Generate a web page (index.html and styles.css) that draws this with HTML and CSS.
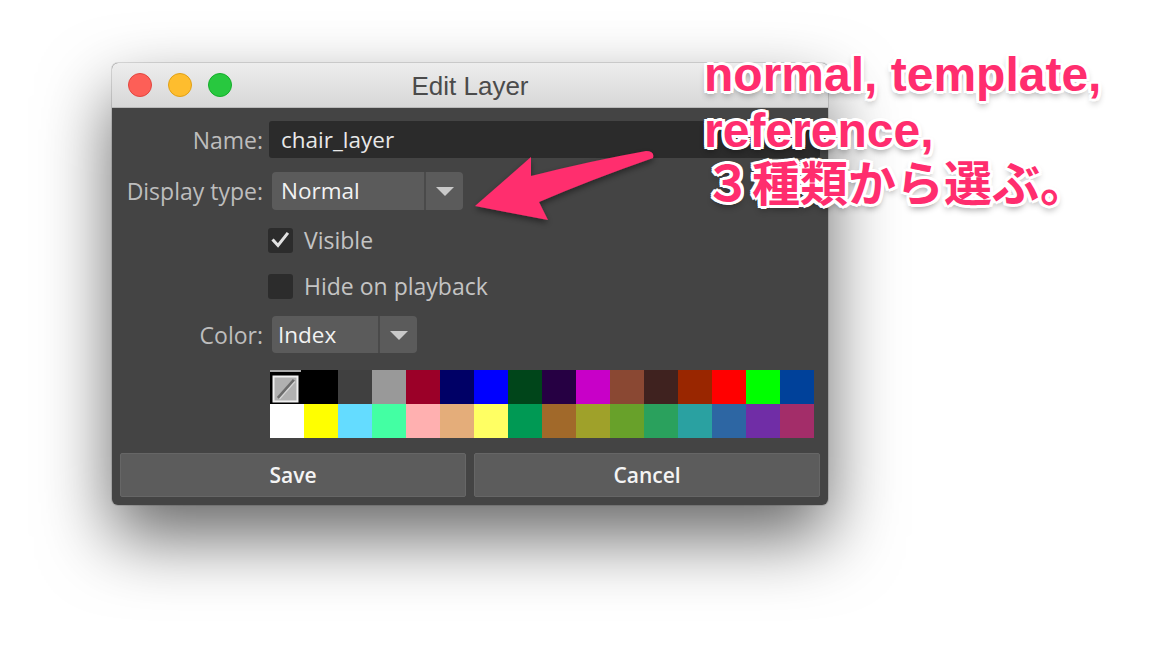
FILE: index.html
```html
<!DOCTYPE html>
<html lang="ja">
<head>
<meta charset="utf-8">
<title>Edit Layer</title>
<link rel="stylesheet" href="styles.css">
</head>
<body>
<div class="stage">
  <div class="window">
    <div class="titlebar">
      <div class="lights">
        <span class="light red"></span>
        <span class="light yellow"></span>
        <span class="light green"></span>
      </div>
      <div class="title">Edit Layer</div>
      <div class="spacer"></div>
    </div>
    <div class="content">
      <div class="row row-name">
        <span class="lbl">Name:</span>
        <div class="field">chair_layer</div>
      </div>
      <div class="row row-display">
        <span class="lbl">Display type:</span>
        <div class="combo combo-display">
          <span class="combo-text">Normal</span>
          <span class="combo-btn"><svg width="18" height="9" viewBox="0 0 18 9"><path d="M0 0 H18 L9 9 Z" fill="#c9c9c9"/></svg></span>
        </div>
      </div>
      <div class="row row-visible">
        <span class="lbl"></span>
        <div class="checkrow">
          <span class="check"><svg width="25" height="25" viewBox="0 0 25 25"><path d="M5.5 12.5 L10 17.5 L19 6" fill="none" stroke="#e2e2e2" stroke-width="3" stroke-linecap="square"/></svg></span>
          <span class="check-label">Visible</span>
        </div>
      </div>
      <div class="row row-hide">
        <span class="lbl"></span>
        <div class="checkrow">
          <span class="check"></span>
          <span class="check-label">Hide on playback</span>
        </div>
      </div>
      <div class="row row-color">
        <span class="lbl">Color:</span>
        <div class="combo combo-color">
          <span class="combo-text">Index</span>
          <span class="combo-btn"><svg width="18" height="9" viewBox="0 0 18 9"><path d="M0 0 H18 L9 9 Z" fill="#c9c9c9"/></svg></span>
        </div>
      </div>
      <div class="row row-palette">
        <span class="lbl"></span>
        <div class="palette">
          <span class="sw sw-none"><svg width="34" height="34" viewBox="0 0 34 34"><rect x="0" y="0" width="31" height="2" fill="#a9a9a9"/><rect x="3.5" y="6.5" width="24" height="25" fill="#b1b1b1" stroke="#f0f0f0" stroke-width="2"/><path d="M8 28 L24 10" stroke="#6c6c6c" stroke-width="3"/><path d="M9.5 29 L25 11.5" stroke="#d6d6d6" stroke-width="1.2"/></svg></span>
          <span class="sw" style="background:#000000"></span>
          <span class="sw" style="background:#404040"></span>
          <span class="sw" style="background:#999999"></span>
          <span class="sw" style="background:#9b0028"></span>
          <span class="sw" style="background:#000066"></span>
          <span class="sw" style="background:#0000ff"></span>
          <span class="sw" style="background:#00451a"></span>
          <span class="sw" style="background:#260043"></span>
          <span class="sw" style="background:#c800c8"></span>
          <span class="sw" style="background:#8a4833"></span>
          <span class="sw" style="background:#3f221f"></span>
          <span class="sw" style="background:#992600"></span>
          <span class="sw" style="background:#ff0000"></span>
          <span class="sw" style="background:#00ff00"></span>
          <span class="sw" style="background:#00419a"></span>
          <span class="sw" style="background:#ffffff"></span>
          <span class="sw" style="background:#ffff00"></span>
          <span class="sw" style="background:#64dcff"></span>
          <span class="sw" style="background:#43ffa3"></span>
          <span class="sw" style="background:#ffb0b0"></span>
          <span class="sw" style="background:#e4ad7a"></span>
          <span class="sw" style="background:#ffff63"></span>
          <span class="sw" style="background:#009954"></span>
          <span class="sw" style="background:#a1692a"></span>
          <span class="sw" style="background:#9fa12a"></span>
          <span class="sw" style="background:#68a12a"></span>
          <span class="sw" style="background:#2aa15d"></span>
          <span class="sw" style="background:#2aa1a1"></span>
          <span class="sw" style="background:#2d66a3"></span>
          <span class="sw" style="background:#702da6"></span>
          <span class="sw" style="background:#a32d69"></span>
        </div>
      </div>
      <div class="buttons">
        <button class="btn">Save</button>
        <button class="btn">Cancel</button>
      </div>
    </div>
  </div>
</div>

<svg class="arrow" width="1164" height="666" viewBox="0 0 1164 666">
  <defs>
    <filter id="sh" x="-20%" y="-20%" width="140%" height="160%">
      <feDropShadow dx="0" dy="3" stdDeviation="3" flood-color="#000" flood-opacity="0.45"/>
    </filter>
  </defs>
  <path d="M475 206 L531 157 L531 176 Q590 161 646 151 Q655 151 653 158 Q590 180 539 202 L548 220 Z" fill="#ff2d6e" filter="url(#sh)"/>
</svg>

<div class="note">
  <span class="note-line">normal, template,</span>
  <span class="note-line">reference,</span>
  <span class="note-line note-jp">３種類から選ぶ。</span>
</div>
</body>
</html>
```

FILE: styles.css
```css
* { box-sizing: border-box; }

html, body {
  margin: 0;
  padding: 0;
  background: #ffffff;
}

body {
  width: 1164px;
  height: 666px;
  overflow: hidden;
  position: relative;
  font-family: "Open Sans", "Noto Sans", sans-serif;
}

.stage {
  padding: 63px 0 0 112px;
}

.window {
  width: 716px;
  height: 442px;
  border-radius: 6px;
  background: #444444;
  box-shadow: 0 32px 70px rgba(0, 0, 0, 0.6), 0 0 0 1px rgba(0, 0, 0, 0.12);
  overflow: hidden;
}

.titlebar {
  height: 45px;
  display: grid;
  grid-template-columns: 1fr auto 1fr;
  align-items: center;
  background: linear-gradient(#ededed, #d7d7d7);
  border-bottom: 1px solid #b9b9b9;
}

.lights {
  display: flex;
  gap: 16px;
  padding-left: 16px;
}

.light {
  width: 24px;
  height: 24px;
  border-radius: 50%;
}

.light.red { background: #fd5f57; border: 1px solid #e2463f; }
.light.yellow { background: #febd2e; border: 1px solid #e1a116; }
.light.green { background: #28c83f; border: 1px solid #14ae2a; }

.title {
  font-family: "Liberation Sans", Arial, sans-serif;
  font-size: 26px;
  color: #4b4b4b;
  padding-top: 2px;
}

.content {
  padding: 13px 8px 8px 0;
}

.row {
  display: grid;
  grid-template-columns: 151px 1fr;
  column-gap: 6px;
  align-items: center;
}

.lbl {
  text-align: right;
  color: #bdbdbd;
  font-size: 23px;
  line-height: 26px;
}

.row-name { height: 37px; margin-bottom: 14px; }
.row-display { height: 38px; margin-bottom: 18px; }
.row-visible { height: 25px; margin-bottom: 21px; }
.row-hide { height: 25px; margin-bottom: 17px; }
.row-color { height: 37px; margin-bottom: 17px; }
.row-palette { height: 68px; margin-bottom: 15px; }

.field {
  height: 37px;
  background: #2b2b2b;
  border-radius: 3px;
  color: #e8e8e8;
  font-size: 22.5px;
  line-height: 37px;
  padding-left: 12px;
}

.combo {
  height: 100%;
  margin-left: 3px;
  display: flex;
  background: #5b5b5b;
  border-radius: 4px;
  overflow: hidden;
}

.combo-display { width: 191px; }
.combo-color { width: 145px; }

.combo-text {
  flex: 1;
  color: #f2f2f2;
  font-size: 22.5px;
  line-height: 38px;
  padding-left: 9px;
}

.combo-color .combo-text { padding-left: 6px; line-height: 37px; }

.combo-btn {
  width: 39px;
  border-left: 2px solid #4a4a4a;
  display: flex;
  align-items: center;
  justify-content: center;
  padding-top: 1px;
}

.checkrow {
  display: flex;
  align-items: center;
  gap: 11px;
  margin-left: -1px;
}

.check {
  width: 25px;
  height: 25px;
  background: #2c2c2c;
  border-radius: 3px;
  display: block;
}

.check svg { display: block; }

.check-label {
  color: #c4c4c4;
  font-size: 23px;
  line-height: 25px;
}

.palette {
  margin-left: 1px;
  width: 544px;
  display: grid;
  grid-template-columns: repeat(16, 34px);
  grid-template-rows: 34px 34px;
}

.sw { display: block; }

.sw-none { background: #000000; }
.sw-none svg { display: block; }

.buttons {
  display: grid;
  grid-template-columns: 1fr 1fr;
  gap: 8px;
  padding-left: 8px;
  height: 44px;
}

.btn {
  font-family: "Open Sans", "Noto Sans", sans-serif;
  font-size: 21px;
  font-weight: 600;
  color: #f4f4f4;
  background: #5c5c5c;
  border: 1px solid #666666;
  border-radius: 2px;
  padding: 0;
  margin: 0;
}

.arrow {
  position: absolute;
  left: 0;
  top: 0;
  pointer-events: none;
}

.note {
  position: absolute;
  left: 704px;
  top: 47px;
  font-family: "Liberation Sans", Arial, "Noto Sans CJK JP", sans-serif;
  font-weight: 700;
  font-size: 48px;
  line-height: 56px;
  color: #ff2d6e;
  white-space: nowrap;
  text-shadow:
    0 -3px 0 #fff, 0 3px 0 #fff, 3px 0 0 #fff, -3px 0 0 #fff,
    2px 2px 0 #fff, -2px 2px 0 #fff, 2px -2px 0 #fff, -2px -2px 0 #fff,
    3px 2px 0 #fff, -3px 2px 0 #fff, 3px -2px 0 #fff, -3px -2px 0 #fff,
    0 4px 7px rgba(0, 0, 0, 0.45);
}

.note-line { display: block; }

.note-jp {
  font-family: "Noto Sans CJK JP", sans-serif;
  font-size: 48px;
  margin-top: -7px;
}
```
